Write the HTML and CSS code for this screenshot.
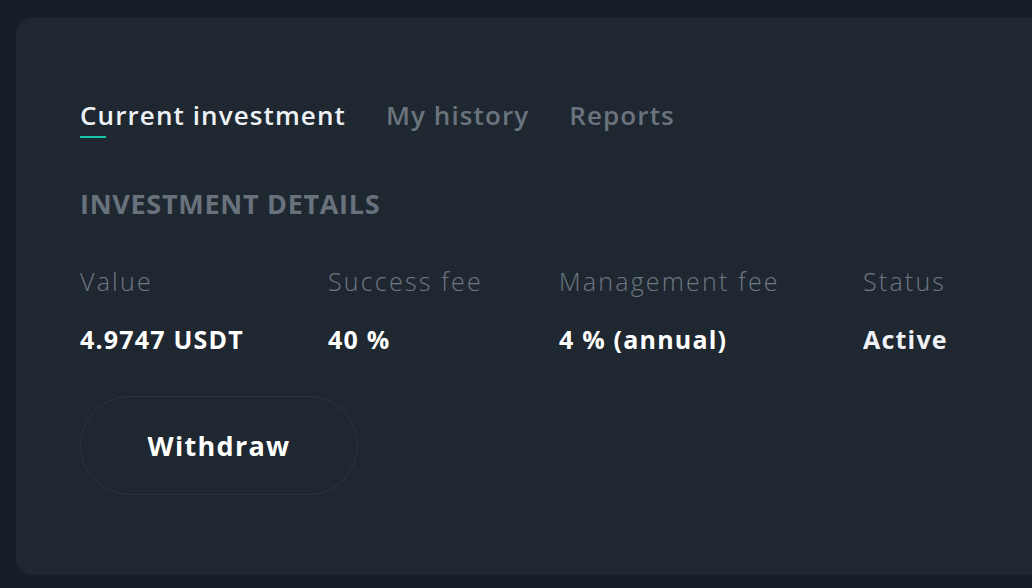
FILE: index.html
```html
<!DOCTYPE html>
<html>
<head>
<meta charset="utf-8">
<link rel="stylesheet" href="styles.css">
</head>
<body>
<div class="page">
  <div class="card">
    <nav class="tabs">
      <div class="tab active">Current investment</div>
      <div class="tab">My history</div>
      <div class="tab">Reports</div>
    </nav>
    <h2 class="section-title">INVESTMENT DETAILS</h2>
    <div class="details">
      <div class="col c1">
        <div class="label">Value</div>
        <div class="value">4.9747 USDT</div>
      </div>
      <div class="col c2">
        <div class="label">Success fee</div>
        <div class="value">40 %</div>
      </div>
      <div class="col c3">
        <div class="label">Management fee</div>
        <div class="value">4 % (annual)</div>
      </div>
      <div class="col c4">
        <div class="label">Status</div>
        <div class="value status">Active</div>
      </div>
    </div>
    <button class="btn">Withdraw</button>
  </div>
</div>
</body>
</html>
```
FILE: styles.css
```css
html, body {
  margin: 0;
  padding: 0;
  background: #161f29;
  width: 1032px;
  height: 588px;
  overflow: hidden;
  font-family: "Open Sans", "Liberation Sans", sans-serif;
}
.page {
  padding: 18px 0 0 16px;
}
.card {
  background: #1f2831;
  border-radius: 16px 0 0 16px;
  height: 557px;
  width: 1040px;
  box-sizing: border-box;
  padding: 81px 0 0 64px;
}
.tabs {
  display: flex;
  gap: 40px;
  height: 40px;
}
.tab {
  font-size: 26px;
  font-weight: 600;
  letter-spacing: 1.1px;
  color: #6a747e;
  line-height: 32px;
  position: relative;
}
.tab.active {
  color: #eef1f5;
}
.tab.active::after {
  content: "";
  position: absolute;
  left: 0;
  top: 37px;
  width: 26px;
  height: 2px;
  background: #17c3ab;
}
.section-title {
  margin: 49px 0 0 0;
  font-size: 27px;
  font-weight: 700;
  letter-spacing: 0.7px;
  color: #68727c;
  line-height: 32px;
}
.details {
  display: flex;
  margin-top: 45px;
}
.col { display: flex; flex-direction: column; }
.c1 { width: 248px; }
.c2 { width: 231px; }
.c3 { width: 304px; }
.label {
  font-size: 25px;
  font-weight: 300;
  letter-spacing: 2.2px;
  color: #6e7882;
  line-height: 32px;
}
.value {
  margin-top: 26px;
  font-size: 25px;
  font-weight: 700;
  letter-spacing: 1.2px;
  color: #ffffff;
  line-height: 32px;
}
.value.status { color: #eef1f5; }
.btn {
  margin-top: 41px;
  width: 278px;
  height: 99px;
  border-radius: 50px;
  border: 1px solid #2c353f;
  background: transparent;
  color: #ffffff;
  font-family: inherit;
  font-size: 27px;
  font-weight: 700;
  letter-spacing: 1.3px;
  cursor: pointer;
}
```
